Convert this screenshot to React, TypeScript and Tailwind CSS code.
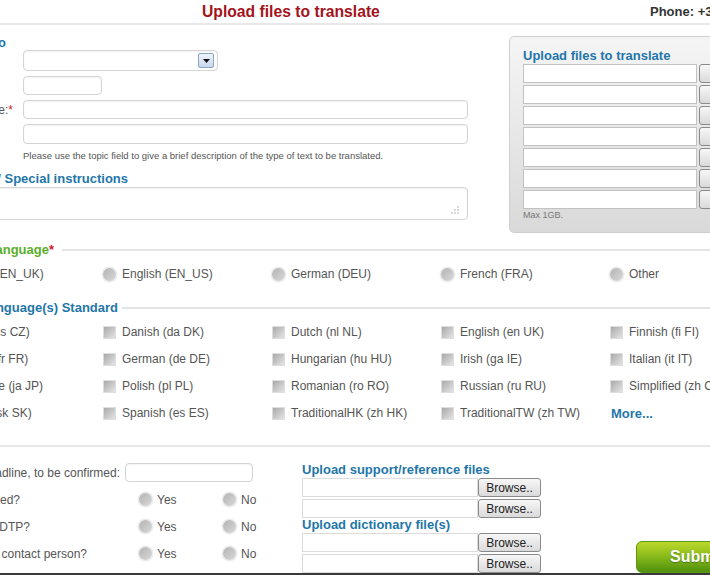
import React from "react";

function RA({ className = "", children }: { className?: string; children: React.ReactNode }) {
  return <div className={"flex justify-end whitespace-nowrap shrink-0 " + className}>{children}</div>;
}

function Radio() {
  return (
    <span className="inline-block w-[13px] h-[13px] shrink-0 rounded-full bg-[linear-gradient(135deg,#b3b3b3,#d9d9d9)] shadow-[0_0_0_1.5px_#ececec]" />
  );
}

function Check() {
  return (
    <span className="inline-block w-[13px] h-[13px] shrink-0 border border-[#dedede] bg-[linear-gradient(135deg,#a9a9a9,#e4e4e4)]" />
  );
}

const sourceLangs = ["English (EN_UK)", "English (EN_US)", "German (DEU)", "French (FRA)", "Other"];

const targetRows = [
  ["Czech (cs CZ)", "Danish (da DK)", "Dutch (nl NL)", "English (en UK)", "Finnish (fi FI)"],
  ["French (fr FR)", "German (de DE)", "Hungarian (hu HU)", "Irish (ga IE)", "Italian (it IT)"],
  ["Japanese (ja JP)", "Polish (pl PL)", "Romanian (ro RO)", "Russian (ru RU)", "Simplified (zh CN)"],
  ["Slovak (sk SK)", "Spanish (es ES)", "TraditionalHK (zh HK)", "TraditionalTW (zh TW)", "MORE"],
];

const inputCls = "bg-white border border-[#d4d4d4] rounded-[4px] shadow-[inset_0_1px_2px_rgba(0,0,0,0.05)]";

function Browse({ wide = false }: { wide?: boolean }) {
  return (
    <div
      className={
        (wide ? "w-[80px] " : "w-[63px] ") +
        "h-[19px] shrink-0 flex items-center justify-center border border-[#8a8a8a] rounded-[3px] bg-[linear-gradient(#f7f7f7,#dadada)] text-[12px] text-[#222] leading-none"
      }
    >
      Browse..
    </div>
  );
}

export default function App() {
  return (
    <div className="w-[710px] h-[575px] overflow-hidden bg-white font-['Liberation_Sans',Arial,sans-serif] text-[12px] text-[#555] flex flex-col">
      {/* header */}
      <header className="h-[25px] shrink-0 flex items-center border-b-[2px] border-[#e8e8e8] whitespace-nowrap">
        <div className="w-[650px] shrink-0 pl-[202px] text-[15.7px] font-bold text-[#a3131b] leading-none">
          Upload files to translate
        </div>
        <div className="text-[13px] font-bold text-[#333] leading-none">Phone: +31 (0)20 123 4567</div>
      </header>

      {/* top section */}
      <div className="flex h-[208px] shrink-0">
        <div className="w-[509px] shrink-0 flex flex-col">
          <RA className="mt-[11px] w-[6px] h-[14px] leading-[14px] text-[13px] font-bold text-[#1f76a9]">
            Project info
          </RA>
          <div className="pl-[23px]">
            <div className={"w-[195px] h-[21px] flex items-center justify-end pr-[3px] " + inputCls}>
              <div className="w-[16px] h-[15px] flex items-center justify-center border border-[#8aa6c4] rounded-[2px] bg-[linear-gradient(#eef4fc,#c6d7ec)]">
                <svg width="7" height="4" viewBox="0 0 7 4">
                  <path d="M0 0h7L3.5 4z" fill="#111" />
                </svg>
              </div>
            </div>
          </div>
          <div className={"mt-[5px] ml-[23px] w-[79px] h-[19px] " + inputCls} />
          <div className="mt-[5px] h-[19px] flex items-center">
            <RA className="w-[13px] leading-none">
              Document title:<span className="text-[#d0202a]">*</span>
            </RA>
            <div className={"ml-[10px] w-[445px] h-[19px] " + inputCls} />
          </div>
          <div className={"mt-[5px] ml-[23px] w-[445px] h-[20px] " + inputCls} />
          <div className="mt-[6px] pl-[23px] text-[9.5px] leading-[12px] text-[#555] whitespace-nowrap">
            Please use the topic field to give a brief description of the type of text to be translated.
          </div>
          <RA className="mt-[10px] w-[128px] h-[14px] leading-[14px] text-[13px] font-bold text-[#1f76a9]">
            Remarks / Special instructions
          </RA>
          <div className={"mt-[1px] -ml-[20px] w-[488px] h-[33px] flex items-end justify-end pr-[8px] pb-[5px] " + inputCls}>
            <svg width="8" height="8" viewBox="0 0 8 8">
              <circle cx="7" cy="1" r="0.8" fill="#aaa" />
              <circle cx="4" cy="4" r="0.8" fill="#aaa" />
              <circle cx="7" cy="4" r="0.8" fill="#aaa" />
              <circle cx="1" cy="7" r="0.8" fill="#aaa" />
              <circle cx="4" cy="7" r="0.8" fill="#aaa" />
              <circle cx="7" cy="7" r="0.8" fill="#aaa" />
            </svg>
          </div>
        </div>

        <div className="mt-[11px] w-[260px] h-[197px] shrink-0 border border-[#cfcfcf] rounded-l-[5px] bg-[linear-gradient(#f5f5f5,#d9d9d9)] pt-[12px] pl-[13px] flex flex-col">
          <div className="h-[14px] leading-[14px] text-[13px] font-bold text-[#1f76a9] whitespace-nowrap">
            Upload files to translate
          </div>
          <div className="mt-[1px] flex flex-col gap-[2px]">
            {[0, 1, 2, 3, 4, 5, 6].map((i) => (
              <div key={i} className="flex">
                <div className="w-[174px] h-[19px] shrink-0 bg-white border border-[#c2c2c2]" />
                <div className="ml-[2px]">
                  <Browse wide />
                </div>
              </div>
            ))}
          </div>
          <div className="mt-[1px] text-[9px] leading-[11px] text-[#777]">Max 1GB.</div>
        </div>
      </div>

      {/* source language */}
      <div className="mt-[10px] h-[14px] shrink-0 flex items-center">
        <RA className="w-[54px] leading-[14px] text-[13px] font-bold text-[#5aae2c]">
          Source language<span className="text-[#d0202a]">*</span>
        </RA>
        <div className="ml-[8px] flex-1 h-[2px] bg-[#e4e4e4]" />
      </div>
      <div className="mt-[9px] h-[16px] shrink-0 -ml-[66px] flex items-center">
        {sourceLangs.map((l) => (
          <div key={l} className="w-[169px] shrink-0 flex items-center">
            <Radio />
            <span className="ml-[6px] leading-none whitespace-nowrap">{l}</span>
          </div>
        ))}
      </div>

      {/* target languages */}
      <div className="mt-[19px] h-[14px] shrink-0 flex items-center">
        <RA className="w-[118px] leading-[14px] text-[13px] font-bold text-[#1f76a9]">
          Target language(s) Standard
        </RA>
        <div className="ml-[4px] flex-1 h-[2px] bg-[#e4e4e4]" />
      </div>
      <div className="mt-[9px] shrink-0 -ml-[66px] flex flex-col gap-[11px]">
        {targetRows.map((row, ri) => (
          <div key={ri} className="h-[16px] flex items-center">
            {row.map((l) =>
              l === "MORE" ? (
                <div key={l} className="w-[169px] shrink-0 flex items-center">
                  <span className="ml-[1px] text-[13px] font-bold text-[#1f76a9] leading-none">More...</span>
                </div>
              ) : (
                <div key={l} className="w-[169px] shrink-0 flex items-center">
                  <Check />
                  <span className="ml-[6px] leading-none whitespace-nowrap">{l}</span>
                </div>
              )
            )}
          </div>
        ))}
      </div>

      <div className="mt-[24px] h-[2px] shrink-0 bg-[#e6e6e6]" />

      {/* bottom section */}
      <div className="h-[126px] shrink-0 flex">
        <div className="w-[302px] shrink-0 pt-[16px] flex flex-col gap-[8px]">
          <div className="h-[19px] flex items-center">
            <RA className="w-[120px] leading-none">Deadline, to be confirmed:</RA>
            <div className={"ml-[5px] w-[128px] h-[19px] " + inputCls} />
          </div>
          {[
            ["Certified translation needed?", "w-[20px]"],
            ["Need DTP?", "w-[30px]"],
            ["Personal contact person?", "w-[87px]"],
          ].map(([label, w]) => (
            <div key={label} className="h-[19px] flex items-center">
              <div className="w-[139px] shrink-0 flex">
                <RA className={w + " leading-none"}>{label}</RA>
              </div>
              <div className="w-[84px] shrink-0 flex items-center">
                <Radio />
                <span className="ml-[5px] leading-none">Yes</span>
              </div>
              <div className="flex items-center">
                <Radio />
                <span className="ml-[5px] leading-none">No</span>
              </div>
            </div>
          ))}
        </div>

        <div className="w-[239px] shrink-0 pt-[16px] flex flex-col">
          <div className="h-[14px] leading-[14px] text-[13px] font-bold text-[#1f76a9] whitespace-nowrap">
            Upload support/reference files
          </div>
          <div className="mt-[1px] flex flex-col gap-[2px]">
            {[0, 1].map((i) => (
              <div key={i} className="flex">
                <div className="w-[176px] h-[19px] shrink-0 bg-white border border-[#dcdcdc]" />
                <Browse />
              </div>
            ))}
          </div>
          <div className="h-[14px] leading-[14px] text-[13px] font-bold text-[#1f76a9] whitespace-nowrap">
            Upload dictionary file(s)
          </div>
          <div className="mt-[1px] flex flex-col gap-[2px]">
            {[0, 1].map((i) => (
              <div key={i} className="flex">
                <div className="w-[176px] h-[19px] shrink-0 bg-white border border-[#dcdcdc]" />
                <Browse />
              </div>
            ))}
          </div>
        </div>

        <div className="ml-[95px] mt-[94px] w-[120px] h-[32px] shrink-0 flex items-center pl-[33px] rounded-[6px] border border-[#5f9714] bg-[linear-gradient(#bcd92b,#86b81a_50%,#4f900d)] text-[16px] font-bold text-white leading-none [text-shadow:0_1px_1px_rgba(0,0,0,0.3)]">
          Submit
        </div>
      </div>

      <div className="h-[2px] shrink-0 bg-[#3a3a3a]" />
    </div>
  );
}
